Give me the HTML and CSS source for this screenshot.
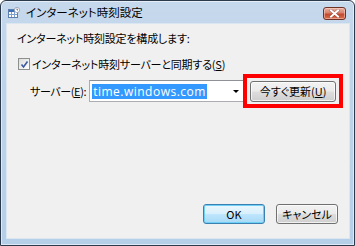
FILE: index.html
```html
<!DOCTYPE html>
<html lang="ja">
<head>
<meta charset="utf-8">
<title>インターネット時刻設定</title>
<link rel="stylesheet" href="styles.css">
</head>
<body>
<div class="window">
  <div class="titlebar">
    <svg class="app-icon" width="12" height="11" viewBox="0 0 12 11">
      <rect x="0.5" y="2.5" width="9" height="8" fill="#fff" stroke="#5a7fb0"/>
      <rect x="1" y="3" width="8" height="2" fill="#3f6fb6"/>
      <path d="M3.5 5v5M6.5 5v5M1 7.5h8" stroke="#7da0cf" stroke-width="1"/>
      <circle cx="9" cy="3" r="2.6" fill="#fff" stroke="#8a9ab0" stroke-width="0.8"/>
      <path d="M9 1.6V3h1" stroke="#334" stroke-width="0.7" fill="none"/>
    </svg>
    <span class="title">インターネット時刻設定</span>
    <div class="close">
      <svg width="11" height="9" viewBox="0 0 11 9">
        <path d="M2 1.5l7 6M9 1.5l-7 6" stroke="#3a1a12" stroke-width="3" stroke-linecap="square" opacity="0.35"/>
        <path d="M2 1.5l7 6M9 1.5l-7 6" stroke="#fff" stroke-width="2" stroke-linecap="square"/>
      </svg>
    </div>
  </div>
  <div class="client">
    <p class="intro">インターネット時刻設定を構成します:</p>
    <div class="check-row">
      <span class="checkbox">
        <svg width="9" height="9" viewBox="0 0 9 9"><path d="M1.5 4.5l2 2.5 4-5.5" stroke="#3b5aa0" stroke-width="1.6" fill="none"/></svg>
      </span>
      <span>インターネット時刻サーバーと同期する(<u>S</u>)</span>
    </div>
    <div class="server-row">
      <span class="server-label">サーバー(<u>E</u>):</span>
      <div class="combo">
        <span class="sel">time.windows.com</span>
        <span class="arrow"></span>
      </div>
      <button class="btn update">今すぐ更新(<u>U</u>)</button>
    </div>
    <div class="actions">
      <button class="btn default">OK</button>
      <button class="btn">キャンセル</button>
    </div>
  </div>
</div>
</body>
</html>
```
FILE: styles.css
```css
html, body {
  margin: 0;
  padding: 0;
  background: #ffffff;
}
body {
  width: 355px;
  height: 246px;
  overflow: hidden;
  font-family: "Noto Sans CJK JP", "Noto Sans", sans-serif;
  font-size: 12px;
  font-feature-settings: "palt";
  color: #000;
}
.window {
  box-sizing: border-box;
  width: 355px;
  height: 246px;
  border: 1px solid #2d3a4c;
  border-radius: 6px 6px 0 0;
  background: linear-gradient(180deg, #c6d8ec 0%, #bcd3ea 40%, #b6cfe9 100%);
  display: flex;
  flex-direction: column;
  box-shadow: inset 0 0 0 1px rgba(255,255,255,0.55);
}
.titlebar {
  height: 22px;
  display: flex;
  align-items: center;
  padding: 0 8px 0 7px;
  flex: none;
}
.app-icon {
  flex: none;
  margin-right: 6px;
  margin-top: 1px;
}
.title {
  flex: 1;
  line-height: 16px;
  font-size: 11.5px;
}
.close {
  width: 23px;
  height: 13px;
  margin-top: 2px;
  box-sizing: border-box;
  border: 1px solid #6e3325;
  border-radius: 3px;
  background: linear-gradient(180deg, #e8b0a2 0%, #d8826c 45%, #c24a2e 55%, #d76c4a 100%);
  display: flex;
  align-items: center;
  justify-content: center;
  box-shadow: inset 0 0 0 1px rgba(255,220,210,0.5);
}
.client {
  flex: 1;
  margin: 0 4px 6px 5px;
  background: #f0f0f0;
  border: 1px solid #dbe6f1;
  display: flex;
  flex-direction: column;
  padding: 6px 11px 14px 10px;
  font-size: 11px;
}
.intro {
  margin: 0;
  line-height: 16px;
  letter-spacing: -0.2px;
}
.check-row {
  display: flex;
  align-items: center;
  margin-top: 10px;
  line-height: 16px;
  letter-spacing: -0.2px;
}
.checkbox {
  box-sizing: border-box;
  width: 12px;
  height: 12px;
  border: 1px solid #8e8f8f;
  background: linear-gradient(135deg, #dcdcdc, #ffffff);
  display: flex;
  align-items: center;
  justify-content: center;
  margin: 0 2px 0 1px;
}
.server-row {
  display: flex;
  align-items: center;
  margin-top: 8px;
  padding-left: 13px;
}
.server-label {
  flex: none;
  white-space: nowrap;
  letter-spacing: -0.4px;
  margin-right: 3px;
}
.combo {
  box-sizing: border-box;
  width: 155px;
  height: 22px;
  background: #fff;
  border: 1px solid #abadb3;
  border-top-color: #8e9196;
  display: flex;
  align-items: center;
  padding: 0 2px;
  flex: none;
}
.sel {
  font-family: "Open Sans", "Noto Sans", sans-serif;
  font-size: 12px;
  background: #3399ff;
  color: #fff;
  line-height: 15px;
  padding: 0 1px;
  letter-spacing: 0.5px;
}
.arrow {
  margin-left: auto;
  margin-right: 2px;
  width: 0;
  height: 0;
  border-left: 3px solid transparent;
  border-right: 3px solid transparent;
  border-top: 3px solid #000;
}
.btn {
  box-sizing: border-box;
  font-family: "Noto Sans CJK JP", "Noto Sans", sans-serif;
  font-size: 11px;
  font-feature-settings: "palt";
  color: #000;
  border: 1px solid #707070;
  border-radius: 3px;
  background: linear-gradient(180deg, #f2f2f2 0%, #ebebeb 48%, #dddddd 52%, #cfcfcf 100%);
  box-shadow: inset 0 0 0 1px rgba(255,255,255,0.7);
  padding: 0;
  line-height: 16px;
  white-space: nowrap;
}
.update {
  position: relative;
  width: 86px;
  height: 21px;
  margin-left: 6px;
  flex: none;
}
.update::after {
  content: "";
  position: absolute;
  left: -8px;
  right: -8px;
  top: -8px;
  bottom: -7px;
  border: 4px solid #ff0000;
}
.actions {
  margin-top: auto;
  display: flex;
  justify-content: flex-end;
  gap: 11px;
}
.actions .btn {
  width: 62px;
  height: 20px;
}
.actions .default {
  border-color: #3c7fb1;
  background: linear-gradient(180deg, #eaf6fd 0%, #d9f0fc 48%, #bee6fd 52%, #a7d9f5 100%);
  box-shadow: inset 0 0 0 1px #6fd0f5;
}
```
